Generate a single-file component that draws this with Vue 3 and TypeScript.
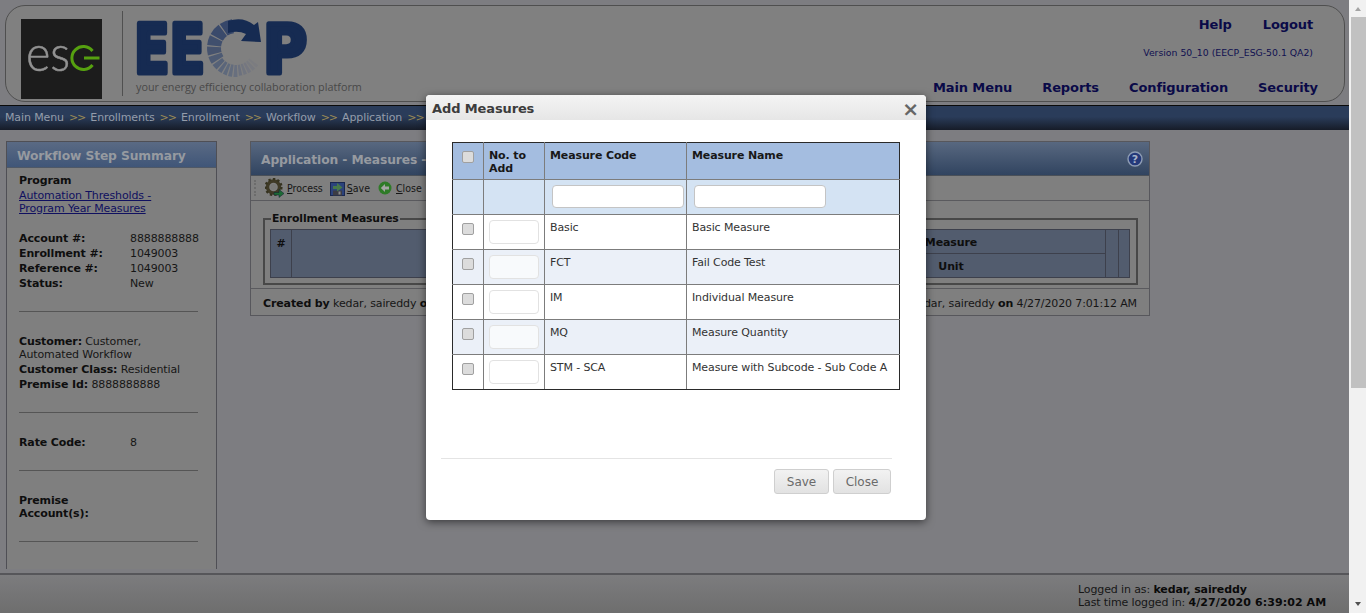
<script setup lang="ts">
interface Row { code: string; name: string }
const rows: Row[] = [
  { code: 'Basic', name: 'Basic Measure' },
  { code: 'FCT', name: 'Fail Code Test' },
  { code: 'IM', name: 'Individual Measure' },
  { code: 'MQ', name: 'Measure Quantity' },
  { code: 'STM - SCA', name: 'Measure with Subcode - Sub Code A' },
]
const crumbs = ['Main Menu', 'Enrollments', 'Enrollment', 'Workflow', 'Application']

function sector(a0: number, a1: number, r0: number, r1: number): string {
  const cx = 236, cy = 48
  const p = (a: number, r: number) => {
    const t = (a * Math.PI) / 180
    return `${(cx + r * Math.cos(t)).toFixed(2)} ${(cy + r * Math.sin(t)).toFixed(2)}`
  }
  return `M${p(a0, r1)}A${r1} ${r1} 0 0 0 ${p(a1, r1)}L${p(a1, r0)}A${r0} ${r0} 0 0 1 ${p(a0, r0)}Z`
}
const spans: [number, number, string][] = [
  [262, 236, '#36476a'], [233, 209, '#3a4a6b'], [206, 186, '#404f6d'], [183, 165, '#46536e'],
  [162, 147, '#4d5a73'], [144, 132, '#556177'], [129, 120, '#5a657a'], [117, 109, '#5e697c'],
  [106, 98, '#636c7d'], [95, 87, '#686f7e'], [84, 77, '#6c717e'], [74, 67, '#71757f'],
  [64, 57, '#757780'], [54, 47, '#787a80'], [44, 38, '#7b7c80'],
]
const ring = spans.map(([a0, a1, fill], i) => ({
  d: sector(a0, a1, i < 5 ? 15 : 17, 29 - (i > 9 ? 1 : 0)),
  fill,
}))
</script>

<template>
  <div class="app">
    <div class="page">
      <header class="head">
        <svg class="esg" width="81" height="80" viewBox="21 19 81 80" role="img" aria-label="ESG logo">
          <rect x="21" y="19" width="81" height="80" fill="#1c1c1c" />
          <text x="26" y="71" font-family="Lato, sans-serif" font-weight="300" font-size="50" fill="#929292" stroke="#929292" stroke-width=".5" textLength="44" lengthAdjust="spacingAndGlyphs">es</text>
          <path d="M92.5 51A11.5 11.5 0 1 0 92.5 65" fill="none" stroke="#56a010" stroke-width="3" />
          <path d="M84 58H99.5" stroke="#56a010" stroke-width="3" />
        </svg>
        <div class="vline"></div>
        <div class="brand">
          <svg class="eecp" width="180" height="65" viewBox="130 15 180 65" role="img" aria-label="EECP">
            <text x="134" y="72.500" font-family="DejaVu Sans, sans-serif" font-weight="700" font-size="67" fill="#162b52" stroke="#162b52" stroke-width="5" stroke-linejoin="round" textLength="71" lengthAdjust="spacingAndGlyphs">EE</text>
            <path v-for="(s, i) in ring" :key="i" :d="s.d" :fill="s.fill" />
            <path d="M228 21Q243 16 254 25L258 22L261 42L241 41L246 34Q238 30 228 33Z" fill="#162b52" />
            <text x="263" y="72.500" font-family="DejaVu Sans, sans-serif" font-weight="700" font-size="67" fill="#162b52" stroke="#162b52" stroke-width="5" stroke-linejoin="round" textLength="44" lengthAdjust="spacingAndGlyphs">P</text>
          </svg>
          <div class="tagline">your energy efficiency collaboration platform</div>
        </div>
        <div class="headright">
          <div class="toplinks"><a>Help</a><a>Logout</a></div>
          <div class="version">Version 50_10 (EECP_ESG-50.1 QA2)</div>
          <nav class="nav"><a>Main Menu</a><a>Reports</a><a>Configuration</a><a>Security</a></nav>
        </div>
      </header>

      <div class="crumbs">
        <template v-for="c in crumbs" :key="c">
          <span>{{ c }}</span><span class="sep">&gt;&gt;</span>
        </template>
      </div>

      <main class="main">
        <aside class="side">
          <h2 class="sidetitle">Workflow Step Summary</h2>
          <div class="sidebody">
            <div class="lbl first">Program</div>
            <a class="plink">Automation Thresholds -<br />Program Year Measures</a>
            <dl class="kv">
              <dt>Account #:</dt><dd>8888888888</dd>
              <dt>Enrollment #:</dt><dd>1049003</dd>
              <dt>Reference #:</dt><dd>1049003</dd>
              <dt>Status:</dt><dd>New</dd>
            </dl>
            <hr class="d1" />
            <div class="cust"><b>Customer:</b> Customer,<br />Automated Workflow</div>
            <div class="l15 cls"><b>Customer Class:</b> Residential</div>
            <div class="l15"><b>Premise Id:</b> 8888888888</div>
            <hr class="d2" />
            <dl class="kv rate"><dt>Rate Code:</dt><dd>8</dd></dl>
            <hr class="d3" />
            <div class="lbl prem">Premise<br />Account(s):</div>
            <hr class="d4" />
            <div class="lbl more">Service</div>
          </div>
        </aside>

        <section class="panel">
          <div class="ptitle">
            <span>Application - Measures - Enrollment 1049003</span>
            <svg width="16" height="16" viewBox="0 0 16 16" role="img" aria-label="Help">
              <circle cx="8" cy="8" r="7" fill="#24397a" stroke="#8d9cb4" stroke-width="1.400" />
              <text x="8" y="12" text-anchor="middle" font-family="DejaVu Sans, sans-serif" font-weight="700" font-size="11" fill="#a8b4c8">?</text>
            </svg>
          </div>
          <div class="tools">
            <div class="grip"></div>
            <a class="tool t1">
              <svg width="20" height="20" viewBox="0 0 20 20" aria-hidden="true">
                <circle cx="8.500" cy="9" r="6" fill="none" stroke="#3f3a26" stroke-width="3.400" />
                <circle cx="8.500" cy="9" r="8" fill="none" stroke="#35321f" stroke-width="2.200" stroke-dasharray="2.400 2.200" />
                <circle cx="8.500" cy="9" r="3" fill="#7a7a78" />
                <path d="M9 14.500L14 14.500V11.500L19 15.500L14 19.500V17H9Z" fill="#1d6a35" stroke="#123" stroke-width=".5" />
              </svg>
              <span><u>P</u>rocess</span>
            </a>
            <a class="tool t2">
              <svg width="15" height="15" viewBox="0 0 15 15" aria-hidden="true">
                <rect x=".5" y="1.500" width="14" height="13" fill="#2c437c" stroke="#1a2850" />
                <rect x="3" y="9.500" width="9" height="5" fill="#3c3c44" />
                <rect x="8.500" y="10.500" width="2" height="3" fill="#8a8a8a" />
                <path d="M3 5H7V2L12.500 6.500L7 10.500V8H3Z" fill="#47794a" />
              </svg>
              <span><u>S</u>ave</span>
            </a>
            <a class="tool t3">
              <svg width="14" height="14" viewBox="0 0 14 14" aria-hidden="true">
                <circle cx="7" cy="7" r="6.500" fill="#2f7b28" />
                <path d="M2.800 7L7 3V5.500H11V8.500H7V11Z" fill="#a5a5a5" />
              </svg>
              <span><u>C</u>lose</span>
            </a>
          </div>
          <div class="pbody">
            <fieldset class="fs">
              <legend>Enrollment Measures</legend>
              <table class="mt">
                <colgroup>
                  <col class="c1" /><col class="c2" /><col class="c3" /><col class="c4" /><col class="c5" />
                </colgroup>
                <tbody>
                  <tr class="r1"><th rowspan="2" class="hash">#</th><th rowspan="2"></th><th>Measure</th><th rowspan="2"></th><th rowspan="2"></th></tr>
                  <tr class="r2"><th>Unit</th></tr>
                </tbody>
              </table>
            </fieldset>
          </div>
          <div class="pfoot">
            <span><b>Created by</b> kedar, saireddy <b>on</b> 4/27/2020 7:01:12 AM</span>
            <span><b>Last Modified by</b> kedar, saireddy <b>on</b> 4/27/2020 7:01:12 AM</span>
          </div>
        </section>
      </main>

      <footer class="foot">
        <div class="login">
          <div>Logged in as: <b>kedar, saireddy</b></div>
          <div>Last time logged in: <b class="date">4/27/2020 6:39:02 AM</b></div>
        </div>
      </footer>

      <div class="modal" role="dialog" aria-label="Add Measures">
        <div class="mhead"><span>Add Measures</span><span class="x">&times;</span></div>
        <div class="mbody">
          <table class="grid">
            <colgroup>
              <col class="g1" /><col class="g2" /><col class="g3" /><col class="g4" />
            </colgroup>
            <thead>
              <tr class="ghead">
                <th class="cb"><input class="check" type="checkbox" /></th>
                <th>No. to<br />Add</th>
                <th>Measure Code</th>
                <th>Measure Name</th>
              </tr>
              <tr class="gfilter">
                <th></th><th></th>
                <th><input class="filter" type="text" /></th>
                <th><input class="filter" type="text" /></th>
              </tr>
            </thead>
            <tbody>
              <tr v-for="r in rows" :key="r.code" class="grow">
                <td class="cb"><input class="check" type="checkbox" /></td>
                <td class="qty"><input class="num" type="text" /></td>
                <td>{{ r.code }}</td>
                <td>{{ r.name }}</td>
              </tr>
            </tbody>
          </table>
        </div>
        <div class="mfoot">
          <button type="button">Save</button>
          <button type="button">Close</button>
        </div>
      </div>
    </div>

    <div class="scroll">
      <span class="arrow up"></span>
      <div class="thumb"></div>
      <span class="arrow down"></span>
    </div>
  </div>
</template>

<style>
html, body { margin: 0; padding: 0; overflow: hidden; }
</style>

<style scoped>
.app {
  display: flex;
  height: 613px;
  overflow: hidden;
  font-family: "DejaVu Sans", Verdana, sans-serif;
  font-size: 11px;
  letter-spacing: -0.12px;
  color: #161616;
}
.page {
  position: relative;
  flex: 1;
  min-width: 0;
  display: flex;
  flex-direction: column;
  background: #7d7d81;
}
.head {
  box-sizing: border-box;
  height: 97px;
  margin: 5px 4px 0 5px;
  display: flex;
  border: 1px solid #4f4f4f;
  border-radius: 20px;
  background: #808080;
}
.esg { margin: 13px 0 0 15px; flex: none; }
.vline { width: 1px; height: 85px; margin: 5px 0 0 20px; background: #505050; }
.brand { margin-left: 7px; display: flex; flex-direction: column; }
.eecp { display: block; margin-top: 9px; }
.tagline {
  margin: -1px 0 0 6px;
  font-family: "Open Sans", sans-serif;
  font-size: 10.800px;
  letter-spacing: 0;
  line-height: 16px;
  color: #484848;
  white-space: nowrap;
}
.headright {
  margin-left: auto;
  display: flex;
  flex-direction: column;
  align-items: flex-end;
  padding-right: 26px;
}
.toplinks { display: flex; gap: 31px; margin-top: 10px; line-height: 17px; font-size: 13px; font-weight: 700; color: #0a0a48; padding-right: 5px; }
.version { margin-top: 14px; font-size: 9.300px; letter-spacing: 0; line-height: 12px; color: #101050; padding-right: 5px; white-space: nowrap; }
.nav { display: flex; gap: 30px; margin-top: 20px; line-height: 17px; font-size: 13px; letter-spacing: -0.1px; font-weight: 700; color: #0a0a48; white-space: nowrap; }
.crumbs {
  box-sizing: border-box;
  height: 25px;
  margin-top: 3px;
  padding: 4px 0 0 5px;
  display: flex;
  gap: 5px;
  border-top: 1px solid #0a0a0a;
  background: linear-gradient(#2a3c5a 0, #2a3c5a 45%, #161c28 100%);
  line-height: 15px;
  letter-spacing: -0.12px;
  color: #949caa;
  white-space: nowrap;
  overflow: hidden;
}
.sep { color: #9a8a55; letter-spacing: -1px; }
.main {
  flex: 1;
  min-height: 0;
  display: flex;
  align-items: flex-start;
  padding: 11px 0 0 6px;
  overflow: hidden;
}
.side {
  box-sizing: border-box;
  flex: none;
  width: 211px;
  height: 428px;
  overflow: hidden;
  border: 1px solid #4f4f55;
  border-bottom: 0;
  background: #7f7f7f;
}
.sidetitle {
  box-sizing: border-box;
  height: 26px;
  margin: 0;
  padding: 0 0 0 10px;
  line-height: 28px;
  font-size: 12.300px;
  font-weight: 700;
  color: #969aa0;
  background: linear-gradient(#5a6a84, #405678);
  border-bottom: 1px solid #4f5866;
}
.sidebody { padding: 5px 0 0 12px; width: 179px; }
.lbl { font-weight: 700; color: #0e0e0e; }
.first { line-height: 15px; }
.plink { display: block; margin-top: 1px; line-height: 13px; color: #101060; text-decoration: underline; }
.kv { display: grid; grid-template-columns: 111px 1fr; margin: 16px 0 0; line-height: 15px; }
.kv dt { font-weight: 700; color: #0e0e0e; }
.kv dd { margin: 0; }
hr { border: 0; height: 1px; background: #555; margin: 0; }
.d1 { margin-top: 20px; }
.cust { margin-top: 23px; line-height: 13px; }
.cls { margin-top: 1px; }
.l15 { line-height: 15px; }
.cust b, .l15 b { color: #0e0e0e; }
.d2 { margin-top: 20px; }
.rate { margin-top: 22px; }
.d3 { margin-top: 20px; }
.prem { margin-top: 23px; line-height: 13px; }
.d4 { margin-top: 21px; }
.more { margin-top: 24px; line-height: 15px; padding-left: 58px; }
.panel {
  box-sizing: border-box;
  flex: none;
  width: 900px;
  margin-left: 33px;
  border: 1px solid #57575c;
  background: #7f7f7f;
}
.ptitle {
  box-sizing: border-box;
  height: 34px;
  display: flex;
  align-items: center;
  justify-content: space-between;
  padding: 2px 6px 0 10px;
  font-size: 12.300px;
  font-weight: 700;
  color: #969aa0;
  background: linear-gradient(#586880, #314460);
  border-bottom: 1px solid #4a5058;
}
.ptitle svg { margin-top: -2px; }
.tools {
  box-sizing: border-box;
  height: 25px;
  display: flex;
  align-items: center;
  border-bottom: 1px solid #5a5a5e;
  font-family: "DejaVu Sans Condensed", "DejaVu Sans", sans-serif;
  font-size: 10.500px;
  font-stretch: condensed;
  letter-spacing: 0;
  color: #161616;
}
.grip { width: 4px; height: 16px; margin-left: 3px; border-left: 2px dotted #6c6c6c; box-sizing: border-box; }
.tool { display: flex; align-items: center; gap: 2px; }
.t1 { margin-left: 7px; }
.t2 { margin-left: 7px; }
.t3 { margin-left: 8px; gap: 4px; }
.pbody { box-sizing: border-box; height: 88px; padding: 11px 11px 0 12px; border-bottom: 1px solid #5a5a5e; }
.fs { box-sizing: border-box; height: 73px; margin: 0; padding: 4px 5px 0 5px; border: 2px solid #484848; min-width: 0; }
.fs legend { padding: 0 1px; margin-left: 1px; font-size: 10.800px; font-weight: 700; line-height: 13px; color: #0e0e0e; }
.mt { box-sizing: border-box; width: 859px; height: 49px; border-collapse: collapse; table-layout: fixed; background: #525c6e; }
.c1 { width: 21px; } .c2 { width: 505px; } .c3 { width: 309px; } .c4 { width: 13px; } .c5 { width: 11px; }
.mt th { border: 1px solid #3d404c; padding: 1px 0 0; font-weight: 700; color: #0e0e0e; text-align: center; }
.mt .hash { vertical-align: top; padding-top: 7px; }
.r1, .r2 { height: 24px; }
.pfoot { box-sizing: border-box; height: 26px; display: flex; justify-content: space-between; align-items: center; padding: 2px 12px 0; white-space: nowrap; }
.pfoot b { color: #0e0e0e; }
.foot {
  box-sizing: border-box;
  height: 40px;
  margin-top: 4px;
  border-top: 2px solid #56565a;
  background: linear-gradient(#7c7c7e, #6e6e6e);
  display: flex;
  justify-content: flex-end;
}
.login { width: 271px; padding-top: 8px; line-height: 13px; color: #161616; white-space: nowrap; }
.login b { color: #0a0a0a; }
.login .date { letter-spacing: 0.1px; }
.modal {
  position: absolute;
  left: 426px;
  top: 95px;
  box-sizing: border-box;
  width: 500px;
  height: 425px;
  display: flex;
  flex-direction: column;
  background: #fff;
  border-radius: 4px;
  box-shadow: 0 2px 9px rgba(0, 0, 0, .55);
  color: #333;
}
.mhead {
  flex: none;
  box-sizing: border-box;
  height: 25px;
  padding: 2px 7px 0 6px;
  display: flex;
  align-items: center;
  justify-content: space-between;
  font-size: 13px;
  font-weight: 700;
  color: #3c3c3c;
  background: linear-gradient(#f4f4f4, #e6e6e6);
  border-radius: 4px 4px 0 0;
}
.x { font-size: 20px; color: #666; line-height: 25px; margin-top: 2px; }
.mbody { flex: 1; padding: 22px 0 0 26px; }
.grid { box-sizing: border-box; width: 447px; border-collapse: collapse; table-layout: fixed; }
.g1 { width: 31px; } .g2 { width: 61px; } .g3 { width: 142px; } .g4 { width: 213px; }
.grid th, .grid td { border: 1px solid #7c7c7c; padding: 6px 0 0 5px; vertical-align: top; text-align: left; line-height: 13px; }
.grid tr > :first-child { border-left-color: #2a2a2a; }
.grid tr > :last-child { border-right-color: #2a2a2a; }
.grid .ghead > * { border-top-color: #2a2a2a; }
.grid tbody tr:last-child > * { border-bottom-color: #2a2a2a; }
.grid thead th { font-weight: 700; color: #181818; }
.ghead { height: 37px; background: #a4bde0; }
.gfilter { height: 35px; background: #d4e3f3; }
.gfilter th { padding: 5px 0 0 7px !important; }
.grow { height: 35px; }
.grow:nth-child(even) { background: #ebf0f8; }
.grid td { color: #333; }
.grid .cb { padding: 8px 0 0 9px; }
.grid .qty { padding: 5px 0 0 5px; }
.check {
  appearance: none;
  display: block;
  box-sizing: border-box;
  width: 12px;
  height: 12px;
  margin: 0;
  background: #dcdcdc;
  border: 1px solid #a0a0a0;
  border-radius: 2px;
}
.filter {
  display: block;
  box-sizing: border-box;
  width: 132px;
  height: 23px;
  border: 1px solid #c4c4c4;
  border-radius: 4px;
  background: #fff;
  padding: 0;
}
.num {
  display: block;
  box-sizing: border-box;
  width: 50px;
  height: 24px;
  border: 1px solid #e2e2e2;
  border-radius: 4px;
  background: #fff;
  padding: 0;
}
.grow:nth-child(even) .num { background: #f8fafc; }
.mfoot {
  flex: none;
  box-sizing: border-box;
  height: 62px;
  margin: 0 34px 0 15px;
  padding: 10px 1px 0 0;
  border-top: 1px solid #e4e4e4;
  display: flex;
  justify-content: flex-end;
  gap: 4px;
}
.mfoot button {
  box-sizing: border-box;
  height: 25px;
  padding: 0;
  border: 1px solid #cfcfcf;
  border-radius: 3px;
  background: linear-gradient(#f2f2f2, #e2e2e2);
  font: 12px "DejaVu Sans", sans-serif;
  color: #6a6a6a;
}
.mfoot button:first-child { width: 55px; }
.mfoot button:last-child { width: 58px; }
.scroll {
  flex: none;
  width: 17px;
  position: relative;
  background: #f1f1f1;
  display: flex;
  flex-direction: column;
  align-items: flex-end;
}
.thumb { width: 15px; height: 371px; background: #c1c1c1; margin-top: 17px; }
.arrow { position: absolute; left: 6px; width: 0; height: 0; border-left: 3px solid transparent; border-right: 3px solid transparent; }
.up { top: 7px; border-bottom: 4px solid #a3a3a3; }
.down { bottom: 7px; border-top: 4px solid #505050; }
</style>
